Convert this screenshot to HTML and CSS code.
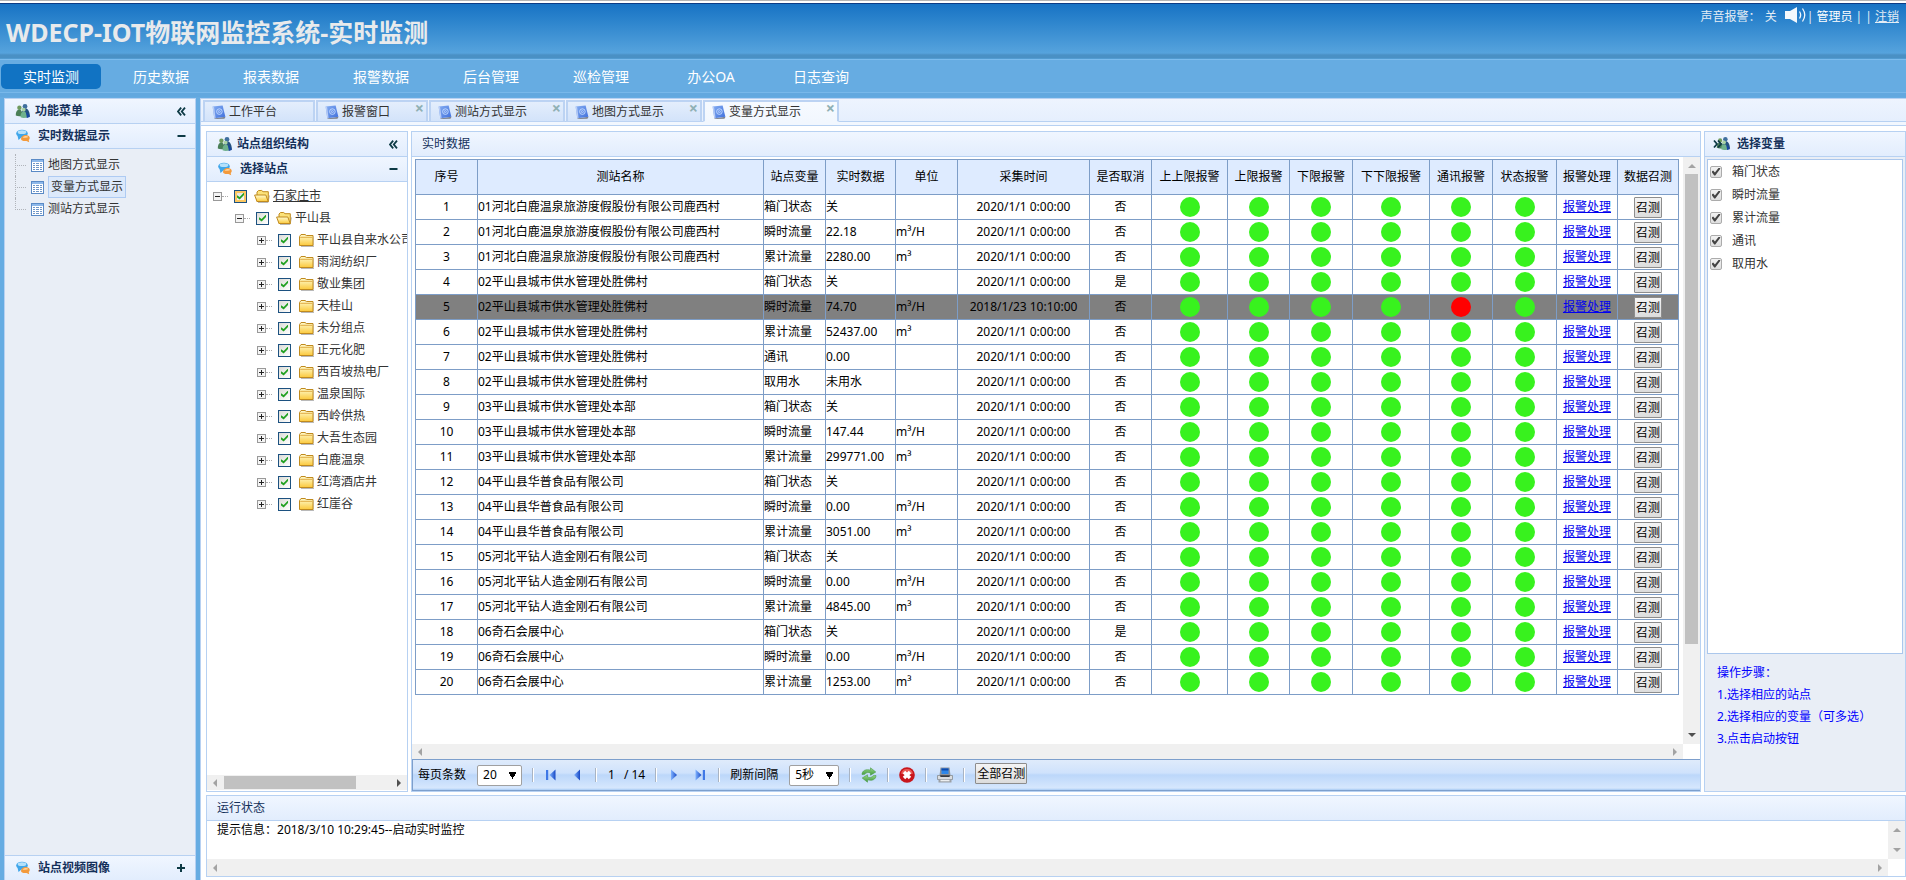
FILE: index.html
```html
<!DOCTYPE html>
<html lang="zh-CN">
<head>
<meta charset="utf-8">
<title>WDECP-IOT物联网监控系统-实时监测</title>
<link rel="stylesheet" href="styles.css">
</head>
<body>
<svg class="defs" aria-hidden="true">
  <defs>
    <linearGradient id="gFolder" x1="0" y1="0" x2="0" y2="1"><stop offset="0" stop-color="#fffcd0"/><stop offset="1" stop-color="#fbc93c"/></linearGradient>
    <linearGradient id="gArrow" x1="0" y1="0" x2="1" y2="0"><stop offset="0" stop-color="#7fb2ff"/><stop offset="1" stop-color="#1748c4"/></linearGradient>
    <linearGradient id="gGreen" x1="0" y1="0" x2="0" y2="1"><stop offset="0" stop-color="#9ad98a"/><stop offset="1" stop-color="#3f9a3c"/></linearGradient>
    <linearGradient id="gBook" x1="0" y1="0" x2="1" y2="1"><stop offset="0" stop-color="#86aef2"/><stop offset="1" stop-color="#3f6fdc"/></linearGradient>
    <symbol id="people" viewBox="0 0 16 16">
      <circle cx="10" cy="3.4" r="2.4" fill="#3f6f9e"/><path d="M6.6 12c0-5 1.500-6.500 3.600-6.500s4.300 1.500 4.800 8.200l-4 .8z" fill="#24517f"/>
      <circle cx="4.400" cy="4.700" r="2.200" fill="#6f9a5d"/><path d="M.8 12.500c0-4 1.400-5.700 3.400-5.700 2.200 0 3.200 1.700 3.200 5.900-2 .9-4.700.8-6.600-.2z" fill="#4a7f57"/>
      <circle cx="8.600" cy="6.700" r="2" fill="#a9d2a4"/><path d="M5.600 14.200c0-4 1-5.500 3.100-5.500s3.300 1.600 3.600 5.400c-2 1.200-4.800 1.200-6.700.1z" fill="#6fb18c"/><path d="M11 9.500c2 .5 3 2 3.600 4.600l-2.700.9z" fill="#1746a0"/>
    </symbol>
    <symbol id="chat" viewBox="0 0 14 13">
      <ellipse cx="6" cy="4" rx="5.800" ry="3.800" fill="#3fa6ea"/><path d="M1.500 6 2.500 10.500 6 7.500z" fill="#3fa6ea"/><ellipse cx="6" cy="2.700" rx="4.300" ry="1.900" fill="#b5e1fb"/>
      <path d="M5 9.500q0-3 3.500-4 4.500-.5 5.200 2.500.3 1.500-1 2.500l.5 2.200-2.700-1.200Q5.500 12 5 9.500z" fill="#f39a3c"/><path d="M6.500 8q1-1.600 3.200-1.600 2 0 2.600 1.200-1.500.9-5.800.4z" fill="#ffd7a0"/>
    </symbol>
    <symbol id="book" viewBox="0 0 14 14">
      <path d="M2 13.500 13.600 11.800 12.400 13.800 3 14z" fill="#7d828c"/><path d="M.6 1.600 10.600.4 13.400 11.700 2.300 13.300z" fill="url(#gBook)"/><path d="M.6 1.600 2 1.400 3.600 13 2.300 13.300z" fill="#b9cdf6"/>
      <circle cx="7.400" cy="6.600" r="2.800" fill="none" stroke="#c6dcff" stroke-width=".9"/><circle cx="7.400" cy="6.600" r="1" fill="none" stroke="#c6dcff" stroke-width=".8"/>
    </symbol>
    <symbol id="folder" viewBox="0 0 15 14">
      <path d="M2 13.500h13V3.500" fill="none" stroke="#b9b9b9"/><path d="M.5 3.500 2 1.500h4l1.500 1h6.500v10H.5z" fill="url(#gFolder)" stroke="#c08a1e"/><path d="M1.200 4.300h12" stroke="#dca53a" stroke-width=".9"/>
    </symbol>
    <symbol id="folder-open" viewBox="0 0 16 14">
      <path d="M4 13.500h10l1.500-7" fill="none" stroke="#b9b9b9"/><path d="M3 12.500V3L4.500 1.500h3.200L9 2.700h5.300v9.800z" fill="#fbe27a" stroke="#c08a1e"/><path d="M.6 6h11.200l2.400 6.500H3z" fill="url(#gFolder)" stroke="#c08a1e"/>
    </symbol>
    <symbol id="grid" viewBox="0 0 13 13">
      <rect x=".5" y=".5" width="12" height="12" fill="#fff" stroke="#5a8ac6"/><path d="M1 1h11v2H1z" fill="#8db8ea"/><path d="M2 4.500h2M5 4.500h3M9 4.500h2M2 6.500h2M5 6.500h3M9 6.500h2M2 8.500h2M5 8.500h3M9 8.500h2M2 10.500h2M5 10.500h3M9 10.500h2" stroke="#6f96c8"/>
    </symbol>
    <symbol id="collapse" viewBox="0 0 9 9"><path d="M4.200.7 1 4.500l3.200 3.800M8 .7 4.800 4.500 8 8.300" fill="none" stroke="#0d3a45" stroke-width="1.800"/></symbol>
    <symbol id="minus" viewBox="0 0 9 9"><path d="M.5 4h8" stroke="#0d3a45" stroke-width="2"/></symbol>
    <symbol id="plus" viewBox="0 0 9 9"><path d="M0 4h8M4 0v8" stroke="#0d3a45" stroke-width="2"/></symbol>
    <symbol id="speaker" viewBox="0 0 22 16"><path d="M0 4h5L12 0v16L5 12H0z" fill="#f4f8fc"/><path d="M14.500 4.500q2.300 3.500 0 7M17.500 1.500q4.500 6.500 0 13" fill="none" stroke="#f4f8fc" stroke-width="1.300"/></symbol>
    <symbol id="first" viewBox="0 0 12 12"><path d="M1 1h2.200v10H1z" fill="#3f78e6"/><path d="M10.500.5v11L4.500 6z" fill="url(#gArrow)"/></symbol>
    <symbol id="prev" viewBox="0 0 12 12"><path d="M9 .5v11L3 6z" fill="url(#gArrow)"/></symbol>
    <symbol id="next" viewBox="0 0 12 12"><path d="M3 .5v11L9 6z" fill="url(#gArrow)"/></symbol>
    <symbol id="last" viewBox="0 0 12 12"><path d="M8.800 1H11v10H8.800z" fill="#3f78e6"/><path d="M1.500.5v11l6-5.500z" fill="url(#gArrow)"/></symbol>
    <symbol id="refresh" viewBox="0 0 16 16">
      <path d="M1 7.500C1 3.500 5 1.800 9.500 3.200V.8L14.800 5 9.500 8.200V6C7 5 5 5.500 3.800 7.300z" fill="url(#gGreen)" stroke="#4c9a46" stroke-width=".6"/><path d="M15 8.500c0 4-4 5.700-8.500 4.300v2.400L1.200 11l5.300-3.200V10c2.500 1 4.500.5 5.700-1.300z" fill="url(#gGreen)" stroke="#4c9a46" stroke-width=".6"/>
    </symbol>
    <symbol id="stop" viewBox="0 0 16 16"><circle cx="8" cy="8" r="7.800" fill="#c8161c"/><path d="M2 6.500a6.300 6.300 0 0 1 12 0Q8 9 2 6.500z" fill="#ea5a55"/><path d="m5 5 6 6M11 5l-6 6" stroke="#fff" stroke-width="3.400"/></symbol>
    <symbol id="printer" viewBox="0 0 16 16"><path d="M3.500.5h9l1 8h-11z" fill="#8d9299"/><path d="M4.500 1.500h7v5.500h-7z" fill="#2d86e8"/><path d="M4.500 1.500h7v2h-7z" fill="#0d4bb0"/><path d="M.5 8.500h15v4H.5z" fill="#d9dcdf" stroke="#868b91" stroke-width=".8"/><path d="M3 8.200h10l-.5 1.800h-9z" fill="#35393f"/><path d="M1.500 12.500h13v3h-13z" fill="#9da1a6"/><path d="M3.500 12.800h9v1.500h-9z" fill="#eceef0"/></symbol>
  </defs>
</svg>

<header class="banner">
  <h1 class="banner-title">WDECP-IOT物联网监控系统-实时监测</h1>
  <div class="banner-tools">
    <span>声音报警<span class="mid">：</span></span><span class="sound-state">关</span>
    <svg class="speaker"><use href="#speaker"/></svg>
    <span>| <span class="user">管理员</span> | | <a href="#logout">注销</a></span>
  </div>
</header>

<nav class="mainnav">
  <a class="on" href="#a">实时监测</a><a href="#b">历史数据</a><a href="#c">报表数据</a><a href="#d">报警数据</a><a href="#e">后台管理</a><a href="#f">巡检管理</a><a href="#g">办公OA</a><a href="#h">日志查询</a>
</nav>

<div class="frame">
  <aside class="side">
    <h2 class="bar"><svg class="i16"><use href="#people"/></svg><span>功能菜单</span><svg class="i9"><use href="#collapse"/></svg></h2>
    <h3 class="bar"><svg class="i14"><use href="#chat"/></svg><span>实时数据显示</span><svg class="i9"><use href="#minus"/></svg></h3>
    <ul class="menu">
      <li><svg class="i13"><use href="#grid"/></svg><a href="#m1">地图方式显示</a></li>
      <li><svg class="i13"><use href="#grid"/></svg><a class="sel" href="#m2">变量方式显示</a></li>
      <li><svg class="i13"><use href="#grid"/></svg><a href="#m3">测站方式显示</a></li>
    </ul>
    <h3 class="bar side-foot"><svg class="i14"><use href="#chat"/></svg><span>站点视频图像</span><svg class="i9"><use href="#plus"/></svg></h3>
  </aside>

  <main class="work">
    <div class="tabs">
      <div class="tab short"><svg class="i14"><use href="#book"/></svg><span>工作平台</span></div>
      <div class="tab short"><svg class="i14"><use href="#book"/></svg><span>报警窗口</span><button class="x" aria-label="关闭">×</button></div>
      <div class="tab"><svg class="i14"><use href="#book"/></svg><span>测站方式显示</span><button class="x" aria-label="关闭">×</button></div>
      <div class="tab"><svg class="i14"><use href="#book"/></svg><span>地图方式显示</span><button class="x" aria-label="关闭">×</button></div>
      <div class="tab on"><svg class="i14"><use href="#book"/></svg><span>变量方式显示</span><button class="x" aria-label="关闭">×</button></div>
    </div>

    <div class="content">
      <div class="upper">
        <section class="panel sites">
          <h2 class="bar"><svg class="i16"><use href="#people"/></svg><span>站点组织结构</span><svg class="i9"><use href="#collapse"/></svg></h2>
          <h3 class="bar"><svg class="i14"><use href="#chat"/></svg><span>选择站点</span><svg class="i9"><use href="#minus"/></svg></h3>
          <ul class="tree" id="tree"></ul>
          <div class="hscroll"><i class="ar left"></i><i class="thumb"></i><i class="ar right dark"></i></div>
        </section>

        <section class="panel data">
          <h2 class="bar plain"><span>实时数据</span></h2>
          <div class="grid-area">
            <div class="grid-view">
              <table class="grid">
                <colgroup><col class="w62"><col><col class="w62"><col class="w70"><col class="w62"><col class="w132"><col class="w62"><col class="w76"><col class="w62"><col class="w63"><col class="w77"><col class="w63"><col class="w64"><col class="w61"><col class="w61"></colgroup>
                <thead><tr><th>序号</th><th>测站名称</th><th>站点变量</th><th>实时数据</th><th>单位</th><th>采集时间</th><th>是否取消</th><th>上上限报警</th><th>上限报警</th><th>下限报警</th><th>下下限报警</th><th>通讯报警</th><th>状态报警</th><th>报警处理</th><th>数据召测</th></tr></thead>
                <tbody id="rows"></tbody>
              </table>
            </div>
            <div class="vscroll"><i class="ar up"></i><i class="vthumb"></i><i class="ar down dark"></i></div>
            <div class="hscroll"><i class="ar left"></i><i class="ar right"></i></div>
          </div>
          <div class="pager">
            <label for="size">每页条数</label>
            <select id="size" class="s45"><option>20</option></select>
            <i class="sep"></i>
            <button class="ib" aria-label="首页"><svg><use href="#first"/></svg></button>
            <button class="ib" aria-label="上一页"><svg><use href="#prev"/></svg></button>
            <i class="sep"></i>
            <span class="pages"><span>1</span><span>/ 14</span></span>
            <i class="sep"></i>
            <button class="ib" aria-label="下一页"><svg><use href="#next"/></svg></button>
            <button class="ib" aria-label="末页"><svg><use href="#last"/></svg></button>
            <i class="sep"></i>
            <label for="gap">刷新间隔</label>
            <select id="gap" class="s50"><option>5秒</option></select>
            <i class="sep"></i>
            <button class="ib big" aria-label="刷新"><svg><use href="#refresh"/></svg></button>
            <i class="sep"></i>
            <button class="ib big" aria-label="停止"><svg><use href="#stop"/></svg></button>
            <i class="sep"></i>
            <button class="ib big" aria-label="打印"><svg><use href="#printer"/></svg></button>
            <i class="sep"></i>
            <button class="btn all">全部召测</button>
          </div>
        </section>

        <section class="panel vars">
          <h2 class="bar"><svg class="fold"><use href="#people" x="3" y="0" width="15" height="15"/><path d="M1 4.500 4 8l-3 3.500M5 4.500 8 8l-3 3.500" fill="none" stroke="#0d3a45" stroke-width="1.800"/></svg><span>选择变量</span></h2>
          <div class="vars-list">
            <label><input type="checkbox" checked>箱门状态</label>
            <label><input type="checkbox" checked>瞬时流量</label>
            <label><input type="checkbox" checked>累计流量</label>
            <label><input type="checkbox" checked>通讯</label>
            <label><input type="checkbox" checked>取用水</label>
          </div>
          <div class="hints"><p>操作步骤<span class="mid">：</span></p><p>1.选择相应的站点</p><p>2.选择相应的变量<span class="mid">（</span>可多选<span class="mid">）</span></p><p>3.点击启动按钮</p></div>
        </section>
      </div>

      <section class="panel status">
        <h2 class="bar plain"><span>运行状态</span></h2>
        <div class="log">
          <p>提示信息<span class="mid">：</span>2018/3/10 10:29:45--启动实时监控</p>
          <div class="vscroll"><i class="ar up"></i><i class="ar down"></i></div>
          <div class="hscroll"><i class="ar left"></i><i class="ar right"></i></div>
        </div>
      </section>
    </div>
  </main>
</div>
<script src="app.js"></script>
</body>
</html>
```

FILE: styles.css
```css
* { box-sizing: border-box; }
html, body { height: 100%; }
body {
  margin: 0;
  display: flex;
  flex-direction: column;
  overflow: hidden;
  font: 12px/16px "Noto Sans", "Noto Sans CJK SC", sans-serif;
  color: #000;
  background: #66ace2;
}
h1, h2, h3, p, ul { margin: 0; padding: 0; }
ul { list-style: none; }
button, select, input { font: inherit; margin: 0; }
.defs { position: absolute; width: 0; height: 0; }
svg { flex: none; display: block; }
.i16 { width: 16px; height: 16px; }
.i14 { width: 14px; height: 14px; }
.i13 { width: 13px; height: 13px; }
.i9 { width: 9px; height: 9px; }
.mid { font-family: "Noto Sans CJK TC", sans-serif; line-height: 1; }

.banner {
  flex: none;
  height: 60px;
  display: flex;
  justify-content: space-between;
  padding: 0 7px 0 6px;
  border-top: 1px solid #b5b5b5;
  background: linear-gradient(#fff 0 2px, #0c3c86 2px 3px, #1873c4 3px, #2c84cd 20px, #56a3dd 52px, #4a90c4 54px 57px, #5aa5dc 58px, #7cbcee 58px);
}
.banner-title { font-size: 25px; line-height: 32px; margin-top: 15px; color: #e8eaec; font-weight: bold; white-space: nowrap; }
.banner-tools { display: flex; align-items: flex-start; padding-top: 8px; height: 24px; color: #e4edf5; }
.sound-state { margin: 0 8px 0 4px; }
.user { color: #fff; }
.banner-tools a { color: #e4edf5; }
.speaker { width: 22px; height: 16px; margin-top: -2px; }

.mainnav {
  flex: none;
  height: 38px;
  display: flex;
  gap: 10px;
  padding: 4px 1px 8px;
  background: #66ace2;
  border-bottom: 1px solid #66ace2;
  box-shadow: inset 0 -4px #62a8df, inset 0 -5px #78b8ea;
}
.mainnav a { width: 100px; border-radius: 5px; color: #fff; font-size: 14px; line-height: 25px; text-align: center; text-decoration: none; }
.mainnav .on { background: #1173c3; }

.frame { flex: 1; min-height: 0; display: flex; gap: 4px; padding-left: 4px; }

.bar {
  flex: none;
  height: 25px;
  display: flex;
  align-items: center;
  padding: 0 9px 0 10px;
  border-bottom: 1px solid #b7d1f2;
  background: linear-gradient(#f0f6ff, #e2edfd);
  font-size: 12px;
  font-weight: bold;
  color: #14305a;
}
.bar .i14 { margin-left: 1px; }
.bar span { flex: 1; margin-left: 4px; line-height: 16px; }
h3.bar span { margin-left: 8px; }
.bar .i9 { margin-left: auto; }
.bar.plain { font-weight: normal; }
.bar.plain span { margin-left: 0; }

.side { flex: none; width: 192px; display: flex; flex-direction: column; background: #e9eef6; border: 1px solid #b7d1f2; border-bottom: 0; }
.menu { flex: 1; padding: 5px 0 0 10px; }
.menu li { position: relative; display: flex; align-items: center; height: 22px; padding-left: 16px; }
.menu li::before { content: ""; position: absolute; left: 0; top: 0; width: 10px; height: 11px; border-left: 1px dotted #b0b4ba; border-bottom: 1px dotted #b0b4ba; }
.menu li:not(:last-child)::after { content: ""; position: absolute; left: 0; top: 11px; height: 11px; border-left: 1px dotted #b0b4ba; }
.menu a { margin-left: 4px; color: #333; text-decoration: none; line-height: 18px; }
.menu .sel { padding: 1px 2px; border: 1px solid #aecbf3; background: #dce9fb; }
.side-foot { border-top: 1px solid #b7d1f2; border-bottom: 0; }

.work { flex: 1; min-width: 0; display: flex; flex-direction: column; background: #fff; border: 1px solid #b7d1f2; border-right: 0; border-bottom: 0; }
.tabs { flex: none; display: flex; gap: 1px; height: 27px; padding: 1px 2px 3px; background: linear-gradient(#eef4fe, #e4eefd); border-bottom: 1px solid #b7d1f2; box-shadow: inset 0 -3px #f2f7fe, inset 0 -4px #b7d1f2; }
.tab { position: relative; width: 136px; display: flex; align-items: center; padding-left: 7px; border: 2px solid #bcd3f3; border-width: 2px 2px 1px; background: linear-gradient(#e4eefc, #d3e3fa); color: #333; }
.tab.short { width: 112px; }
.tab.on { background: linear-gradient(#f6faff, #f2f7fe); border-bottom-color: #f2f7fe; }
.tab span { margin-left: 3px; }
.x { position: absolute; right: 2px; top: -2px; padding: 0; border: 0; background: none; color: #8fb0b4; font-size: 16px; font-weight: bold; line-height: 16px; }

.content { flex: 1; min-height: 0; display: flex; flex-direction: column; gap: 3px; padding: 5px 0 3px 5px; }
.upper { flex: 1; min-height: 0; display: flex; gap: 3px; }
.panel { display: flex; flex-direction: column; min-height: 0; background: #fff; border: 1px solid #b7d1f2; }
.sites { flex: none; width: 202px; }
.sites .hscroll { flex: none; margin-bottom: 1px; }

.tree { flex: 1; min-height: 0; overflow: hidden; padding: 3px 0 0 6px; color: #333; white-space: nowrap; }
.tree li { display: flex; align-items: center; height: 22px; }
.tree .l2 { padding-left: 22px; }
.tree .l3 { padding-left: 44px; }
.twist { width: 9px; height: 9px; border: 1px solid #999; background: linear-gradient(#222, #222) center / 5px 1px no-repeat, #f4f4f4; flex: none; }
.twist.shut { background: linear-gradient(#222, #222) center / 5px 1px no-repeat, linear-gradient(#222, #222) center / 1px 5px no-repeat, #f4f4f4; }
.dots { width: 6px; height: 1px; margin-right: 6px; border-top: 1px dotted #aaa; flex: none; }
.tree label { display: flex; align-items: center; }
.tree input { appearance: none; width: 13px; height: 13px; flex: none; border: 1px solid #1c5180; background: linear-gradient(135deg, #dcdcd7, #fff); display: grid; place-content: center; }
.tree .l1 input { box-shadow: inset 0 0 0 2px #fbc761; }
.tree input::before { content: ""; width: 7px; height: 7px; background: #21a121; clip-path: polygon(0 40%, 0 70%, 38% 100%, 100% 35%, 100% 0, 38% 64%); }
.tree svg { width: 15px; height: 14px; margin: 0 3px 0 8px; }
.tree .l1 svg, .tree .l2 svg { width: 16px; margin-left: 7px; }
.tree .l1 label span { text-decoration: underline; }

.ar { width: 0; height: 0; flex: none; border: 4px solid transparent; }
.ar.left { border-right-color: #a3a3a3; border-left-width: 0; }
.ar.right { border-left-color: #a3a3a3; border-right-width: 0; }
.ar.up { border-bottom-color: #a3a3a3; border-top-width: 0; }
.ar.down { border-top-color: #a3a3a3; border-bottom-width: 0; }
.ar.right.dark { border-left-color: #505050; }
.ar.down.dark { border-top-color: #505050; }
.hscroll { display: flex; align-items: center; height: 15px; padding: 0 6px; background: #f0f0f0; }
.hscroll .right { margin-left: auto; }
.thumb { width: 132px; height: 13px; margin-left: 7px; background: #c1c1c1; }
.vscroll { display: flex; flex-direction: column; align-items: center; width: 17px; padding: 7px 0; background: #f0f0f0; }
.vscroll .down { margin-top: auto; }
.vthumb { width: 13px; flex: 0 1 470px; margin-top: 6px; background: #c1c1c1; }

.data { flex: 1; min-width: 0; }
.grid-area { flex: 1; min-height: 0; display: grid; grid-template: minmax(0, 1fr) 15px / minmax(0, 1fr) 17px; }
.grid-view { overflow: hidden; padding: 2px 4px 0 3px; }
.grid { width: 100%; table-layout: fixed; border-collapse: collapse; }
.grid th, .grid td { height: 25px; padding: 0; border: 1px solid #7d9dc7; font-weight: normal; text-align: center; white-space: nowrap; overflow: hidden; }
.grid th { height: 35px; background: #deebff; }
.grid .lt { text-align: left; }
.grid .hot { background: #808080; }
.grid a { color: #00e; }
.w61 { width: 61px; } .w62 { width: 62px; } .w63 { width: 63px; } .w64 { width: 64px; }
.w70 { width: 70px; } .w76 { width: 76px; } .w77 { width: 77px; } .w132 { width: 132px; }
.lamp { display: block; width: 20px; height: 20px; margin: 0 auto; border-radius: 50%; background: #38f21e; }
.lamp.red { background: #f00; }
.btn { height: 21px; padding: 0 1px; border: 1px solid #8d8d8d; border-radius: 1px; background: linear-gradient(#f4f4f4, #dcdcdc); color: #000; line-height: 17px; white-space: nowrap; }
.grid .btn { display: block; width: 28px; margin: 0 auto; }

.pager { flex: none; display: flex; align-items: center; height: 32px; padding: 0 4px; border: 1px solid #7d9fcc; border-right: 0; background: linear-gradient(#dfebfb, #cfe2fc 13px, #bcd7fa 15px, #d6e7fd 28px, #a9cbf4 30px); }
.pager select { appearance: none; height: 21px; margin-left: 11px; padding: 0 5px; border: 1px solid #a0a0a0; border-radius: 2px; color: #000; background: conic-gradient(from -30deg at 50% 100%, #000 60deg, transparent 0) right 5px center / 7px 7px no-repeat, #fff; }
.s45 { width: 45px; }
.s50 { width: 50px; }
.sep { width: 2px; height: 14px; margin-left: 10px; border-left: 1px solid #a9b4c3; border-right: 1px solid #fff; flex: none; }
.ib { padding: 0; border: 0; background: none; margin-left: 11px; }
.ib svg { width: 12px; height: 12px; }
.ib + .ib { margin-left: 14px; }
.ib + .sep { margin-left: 12px; }
.ib.big { margin-left: 10px; }
.ib.big svg { width: 16px; height: 16px; }
.ib.big + .sep { margin-left: 10px; }
.pages { display: flex; gap: 9px; margin-left: 11px; }
.pager label { margin-left: 1px; }
.sep + label { margin-left: 10px; }
.all { width: 52px; margin: 0 0 4px 10px; }

.vars { flex: none; width: 202px; background: #e9eef6; }
.vars .bar { padding-left: 8px; }
.fold { width: 18px; height: 16px; }
.vars .bar span { margin-left: 6px; }
.vars-list { flex: 1; margin: 2px 2px 0; padding: 0 2px; background: #fff; border: 1px solid #abc7ec; }
.vars-list label { display: flex; align-items: center; gap: 10px; height: 23px; color: #333; }
.vars-list input { appearance: none; width: 12px; height: 12px; border: 1px solid #ababab; border-radius: 2px; background: linear-gradient(#f2f2f2, #dedede); display: grid; place-content: center; }
.vars-list input::before { content: ""; width: 9px; height: 8px; background: #444; clip-path: polygon(0 52%, 18% 38%, 38% 62%, 82% 0, 100% 14%, 42% 100%, 30% 100%); }
.hints { padding: 8px 12px 41px; color: #00f; line-height: 22px; }

.status { flex: none; }
.status .bar, .data .bar { padding-left: 10px; }
.log { display: grid; grid-template: 38px 17px / minmax(0, 1fr) 17px; }
.log p { padding: 1px 10px; }
.log .hscroll { height: 17px; }
```

FILE: app.js
```javascript
const names = ['01河北白鹿温泉旅游度假股份有限公司鹿西村', '02平山县城市供水管理处胜佛村', '03平山县城市供水管理处本部', '04平山县华普食品有限公司', '05河北平钻人造金刚石有限公司', '06奇石会展中心'];
const kinds = { d: ['箱门状态', ''], f: ['瞬时流量', 'm³/H'], t: ['累计流量', 'm³'], c: ['通讯', ''], w: ['取用水', ''] };
const data = [
  [0, 'd', '关'], [0, 'f', '22.18'], [0, 't', '2280.00'],
  [1, 'd', '关', '是'], [1, 'f', '74.70'], [1, 't', '52437.00'], [1, 'c', '0.00'], [1, 'w', '未用水'],
  [2, 'd', '关'], [2, 'f', '147.44'], [2, 't', '299771.00'],
  [3, 'd', '关'], [3, 'f', '0.00'], [3, 't', '3051.00'],
  [4, 'd', '关'], [4, 'f', '0.00'], [4, 't', '4845.00'],
  [5, 'd', '关', '是'], [5, 'f', '0.00'], [5, 't', '1253.00']
];
document.getElementById('rows').innerHTML = data.map(([n, k, v, off], i) => {
  const alarm = i === 4;
  const lamps = [0, 1, 2, 3, 4, 5].map(j => `<td><i class="lamp${alarm && j === 4 ? ' red' : ''}"></i></td>`).join('');
  return `<tr${alarm ? ' class="hot"' : ''}><td>${i + 1}</td><td class="lt">${names[n]}</td><td class="lt">${kinds[k][0]}</td><td class="lt">${v}</td><td class="lt">${kinds[k][1]}</td><td>${alarm ? '2018/1/23 10:10:00' : '2020/1/1 0:00:00'}</td><td>${off || '否'}</td>${lamps}<td><a href="#alarm">报警处理</a></td><td><button class="btn">召测</button></td></tr>`;
}).join('');

const nodes = [[1, '石家庄市'], [2, '平山县']].concat(
  ['平山县自来水公司', '雨润纺织厂', '敬业集团', '天桂山', '未分组点', '正元化肥', '西百坡热电厂', '温泉国际', '西岭供热', '大吾生态园', '白鹿温泉', '红湾酒店井', '红崖谷'].map(t => [3, t]));
document.getElementById('tree').innerHTML = nodes.map(([l, t]) =>
  `<li class="l${l}"><i class="twist${l === 3 ? ' shut' : ''}"></i><i class="dots"></i><label><input type="checkbox" checked><svg><use href="#folder${l < 3 ? '-open' : ''}"/></svg><span>${t}</span></label></li>`).join('');
```
